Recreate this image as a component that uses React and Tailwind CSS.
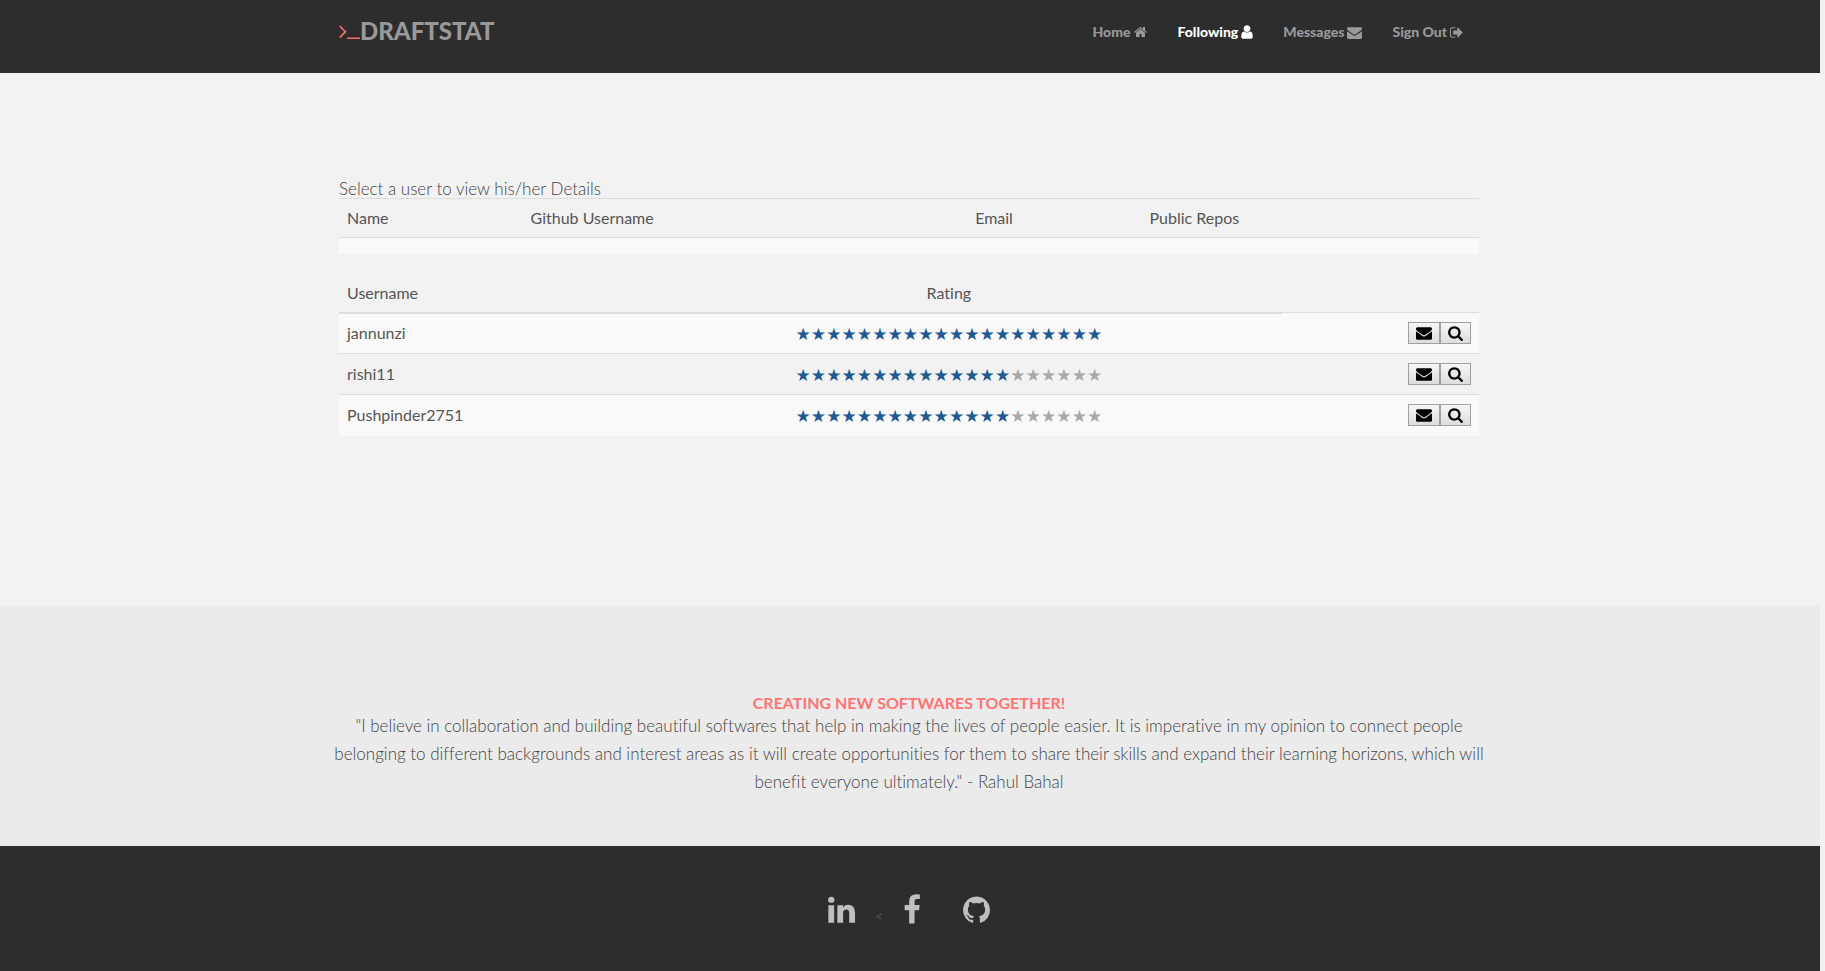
import React from "react";

const ICONS = {
  home: {
    box: "64 0 1664 1792",
    d: "M1472 992v480q0 26-19 45t-45 19h-384v-384h-256v384h-384q-26 0-45-19t-19-45v-480q0-1 .5-3t.5-3l575-474 575 474q1 2 1 6zm223-69l-62 74q-8 9-21 11h-3q-13 0-21-7l-692-577-692 577q-12 8-24 7-13-2-21-11l-62-74q-8-10-7-23.5t11-21.5l719-599q32-26 76-26t76 26l244 204v-195q0-14 9-23t23-9h192q14 0 23 9t9 23v408l219 182q10 8 11 21.5t-7 23.5z",
  },
  user: {
    box: "256 0 1280 1792",
    d: "M1536 1399q0 109-62.5 187t-150.5 78h-854q-88 0-150.5-78t-62.5-187q0-85 8.5-160.5t31.5-152 58.5-131 94-89 134.5-34.5q131 128 313 128t313-128q76 0 134.5 34.5t94 89 58.5 131 31.5 152 8.5 160.5zm-256-887q0 159-112.5 271.5t-271.5 112.5-271.5-112.5-112.5-271.5 112.5-271.5 271.5-112.5 271.5 112.5 112.5 271.5z",
  },
  envelope: {
    box: "0 0 1792 1792",
    d: "M1792 710v794q0 66-47 113t-113 47h-1472q-66 0-113-47t-47-113v-794q44 49 101 87 362 246 497 345 57 42 92.5 65.5t94.5 48 110 24.5h2q51 0 110-24.5t94.5-48 92.5-65.5q170-123 498-345 57-39 100-87zm0-294q0 79-49 151t-122 123q-376 261-468 325-10 7-42.5 31t-54 38.5-52 32.5-57.5 27-50 9h-2q-23 0-50-9t-57.5-27-52-32.5-54-38.5-42.5-31q-91-64-262-182.5t-205-142.5q-62-42-117-115.5t-55-136.5q0-78 41.5-130t118.5-52h1472q65 0 112.5 47t47.5 113z",
  },
  signOut: {
    box: "64 0 1600 1792",
    d: "M704 1440q0 4 1 20t.5 26.5-3 23.5-10 19.5-20.5 6.5h-320q-119 0-203.5-84.5t-84.5-203.5v-704q0-119 84.5-203.5t203.5-84.5h320q13 0 22.5 9.5t9.5 22.5q0 4 1 20t.5 26.5-3 23.5-10 19.5-20.5 6.5h-320q-66 0-113 47t-47 113v704q0 66 47 113t113 47h312l11.5 1 11.5 3 8 5.5 7 9 2 13.5zm928-544q0 26-19 45l-544 544q-19 19-45 19t-45-19-19-45v-288h-448q-26 0-45-19t-19-45v-384q0-26 19-45t45-19h448v-288q0-26 19-45t45-19 45 19l544 544q19 19 19 45z",
  },
  search: {
    box: "64 0 1664 1792",
    d: "M1216 832q0-185-131.5-316.5t-316.5-131.5-316.5 131.5-131.5 316.5 131.5 316.5 316.5 131.5 316.5-131.5 131.5-316.5zm512 832q0 52-38 90t-90 38q-54 0-90-38l-343-342q-179 124-399 124-143 0-273.5-55.5t-225-150-150-225-55.5-273.5 55.5-273.5 150-225 225-150 273.5-55.5 273.5 55.5 225 150 150 225 55.5 273.5q0 220-124 399l343 343q37 37 37 90z",
  },
  terminal: {
    box: "64 0 1664 1792",
    d: "M649 983l-466 466q-10 10-23 10t-23-10l-50-50q-10-10-10-23t10-23l393-393-393-393q-10-10-10-23t10-23l50-50q10-10 23-10t23 10l466 466q10 10 10 23t-10 23zm1079 457v64q0 14-9 23t-23 9h-960q-14 0-23-9t-9-23v-64q0-14 9-23t23-9h960q14 0 23 9t9 23z",
  },
  linkedin: {
    box: "128 0 1536 1792",
    d: "M477 625v991h-330v-991h330zm21-306q1 73-50.5 122t-135.5 49h-2q-82 0-132-49t-50-122q0-74 51.5-122.5t134.5-48.5 133 48.5 51 122.5zm1166 729v568h-329v-530q0-105-40.5-164.5t-126.5-59.5q-63 0-105.5 34.5t-63.5 85.5q-11 30-11 81v553h-329q2-399 2-647t-1-296l-1-48h329v144h-2q20-32 41-56t56.5-52 87-43.5 114.5-15.5q171 0 275 113.5t104 332.5z",
  },
  facebook: {
    box: "384 0 1024 1792",
    d: "M1343 12v264h-157q-86 0-116 36t-30 108v189h293l-39 296h-254v759h-306v-759h-255v-296h255v-218q0-186 104-288.5t277-102.5q147 0 228 12z",
  },
  github: {
    box: "128 0 1536 1792",
    d: "M896 128q209 0 385.5 103t279.5 279.5 103 385.5q0 251-146.5 451.5t-378.5 277.5q-27 5-40-7t-13-30q0-3 .5-76.5t.5-134.5q0-97-52-142 57-6 102.5-18t94-39 81-66.5 53-105 20.5-150.5q0-119-79-206 37-91-8-204-28-9-81 11t-92 44l-38 24q-93-26-192-26t-192 26q-16-11-42.5-27t-83.5-38.5-85-13.5q-45 113-8 204-79 87-79 206 0 85 20.5 150t52.5 105 80.5 67 94 39 102.5 18q-39 36-49 103-21 10-45 15t-57 5-65.5-21.5-55.5-62.5q-19-32-48.5-52t-49.5-24l-20-3q-21 0-29 4.5t-5 11.5 9 14 13 12l7 5q22 10 43.5 38t31.5 51l10 23q13 38 44 61.5t67 30 69.5 7 55.5-3.5l23-4q0 38 .5 88.5t.5 54.5q0 18-13 30t-40 7q-232-77-378.5-277.5t-146.5-451.5q0-209 103-385.5t279.5-279.5 385.5-103z",
  },
};

function Icon({ name, className }) {
  return (
    <svg viewBox={ICONS[name].box} className={className} fill="currentColor" aria-hidden="true">
      <path d={ICONS[name].d} />
    </svg>
  );
}

const NAV = [
  { label: "Home", icon: "home", size: "h-[14px] w-[13px] ml-1" },
  { label: "Following", icon: "user", size: "h-[16px] w-[12px] ml-[3px]", active: true },
  { label: "Messages", icon: "envelope", size: "h-[15px] w-[15px] ml-[3px]" },
  { label: "Sign Out", icon: "signOut", size: "h-[15px] w-[13px] ml-[3px]" },
];

const USERS = [
  { name: "jannunzi", rating: 20 },
  { name: "rishi11", rating: 14 },
  { name: "Pushpinder2751", rating: 14 },
];

function Header() {
  return (
    <header className="bg-[#2d2d2d] text-[#999999]">
      <div className="mx-auto flex h-[73px] max-w-[1142px] items-start justify-between pr-0.5">
        <a href="#home" className="flex items-center pt-4 text-2xl leading-[30px] font-black">
          <Icon name="terminal" className="h-6 w-[21px] text-[#ff6e6e]" />
          DRAFTSTAT
        </a>
        <nav className="flex gap-[30px] pt-[21px] pr-4 text-sm leading-[22px] font-black">
          {NAV.map((item) => (
            <a
              key={item.label}
              href={"#" + item.label}
              className={item.active ? "flex items-center text-white" : "flex items-center"}
            >
              {item.label}
              <Icon name={item.icon} className={item.size} />
            </a>
          ))}
        </nav>
      </div>
    </header>
  );
}

function Stars({ rating }) {
  return (
    <div role="img" aria-label={rating + " out of 20"} className="mx-auto flex w-[307px] pt-0.5 font-['DejaVu_Sans'] text-[17px] leading-[22px]">
      {Array.from({ length: 20 }, (_, i) => (
        <span key={i} className={i < rating ? "flex-1 text-center text-[#1f5a92]" : "flex-1 text-center text-[#a9a9a9]"}>
          ★
        </span>
      ))}
    </div>
  );
}

const actionClass =
  "flex h-[22px] items-center justify-center border border-[#a0a0a0] bg-linear-to-b from-[#f6f6f6] to-[#dddddd] text-black";

export default function App() {
  return (
    <div className="min-h-screen bg-[#f2f2f2] pr-[5px] font-[Lato,sans-serif] text-base leading-[22px] text-[#555555] [font-variant-ligatures:none]">
      <Header />
      <main>
        <section className="px-4 pt-[107px] pb-[170px]">
          <div className="mx-auto max-w-[1142px] pr-0.5">
            <h1 className="text-[17px] leading-[18px] font-light text-[#444444]">Select a user to view his/her Details</h1>
            <table className="w-full table-fixed text-left">
              <thead>
                <tr className="h-[39px] border-y border-[#dddddd]">
                  <th className="w-[16.1%] px-2 font-normal">Name</th>
                  <th className="w-[39%] px-2 font-normal">Github Username</th>
                  <th className="w-[15.3%] px-2 font-normal">Email</th>
                  <th className="px-2 font-normal">Public Repos</th>
                </tr>
              </thead>
              <tbody>
                <tr className="h-4 bg-[#f9f9f9]">
                  <td colSpan={4}></td>
                </tr>
              </tbody>
            </table>
            <table className="mt-5 w-full table-fixed text-left">
              <thead>
                <tr className="h-[39px]">
                  <th className="w-[24.3%] border-b-2 border-[#dddddd] px-2 font-normal">Username</th>
                  <th className="w-[58.4%] border-b-2 border-[#dddddd] px-2 text-center font-normal">Rating</th>
                  <td></td>
                </tr>
              </thead>
              <tbody>
                {USERS.map((user) => (
                  <tr key={user.name} className="h-[41px] border-t border-[#dddddd] odd:bg-[#f9f9f9]">
                    <td className="px-2">{user.name}</td>
                    <td className="px-2">
                      <Stars rating={user.rating} />
                    </td>
                    <td className="px-2">
                      <div className="flex justify-end">
                        <button type="button" aria-label={"Message " + user.name} className={actionClass + " w-8"}>
                          <Icon name="envelope" className="h-4 w-4" />
                        </button>
                        <button type="button" aria-label={"View " + user.name} className={actionClass + " w-[31px]"}>
                          <Icon name="search" className="h-4 w-[15px]" />
                        </button>
                      </div>
                    </td>
                  </tr>
                ))}
              </tbody>
            </table>
          </div>
        </section>
        <section className="bg-[#ebebeb] px-4 pt-[88px] pb-[50px] text-center">
          <div className="mx-auto max-w-[1174px] pr-0.5">
            <h2 className="text-base leading-[18px] font-bold text-[#ff7474]">CREATING NEW SOFTWARES TOGETHER!</h2>
            <p className="text-[17px] leading-7 font-light text-[#444444]">
              "I believe in collaboration and building beautiful softwares that help in making the lives of people
              easier. It is imperative in my opinion to connect people belonging to different backgrounds and interest
              areas as it will create opportunities for them to share their skills and expand their learning horizons,
              which will benefit everyone ultimately." - Rahul Bahal
            </p>
          </div>
        </section>
      </main>
      <footer className="flex h-[125px] items-start justify-center bg-[#2d2d2d] pt-12 pr-0.5 text-[#bfbfbf]">
        <a href="#linkedin" aria-label="LinkedIn">
          <Icon name="linkedin" className="h-8 w-[27px]" />
        </a>
        <span className="mx-5 pt-[14px] text-sm leading-4 text-[#555555]">&lt;</span>
        <a href="#facebook" aria-label="Facebook">
          <Icon name="facebook" className="h-8 w-[18px]" />
        </a>
        <a href="#github" aria-label="GitHub" className="ml-[42px]">
          <Icon name="github" className="h-8 w-[27px]" />
        </a>
      </footer>
    </div>
  );
}
